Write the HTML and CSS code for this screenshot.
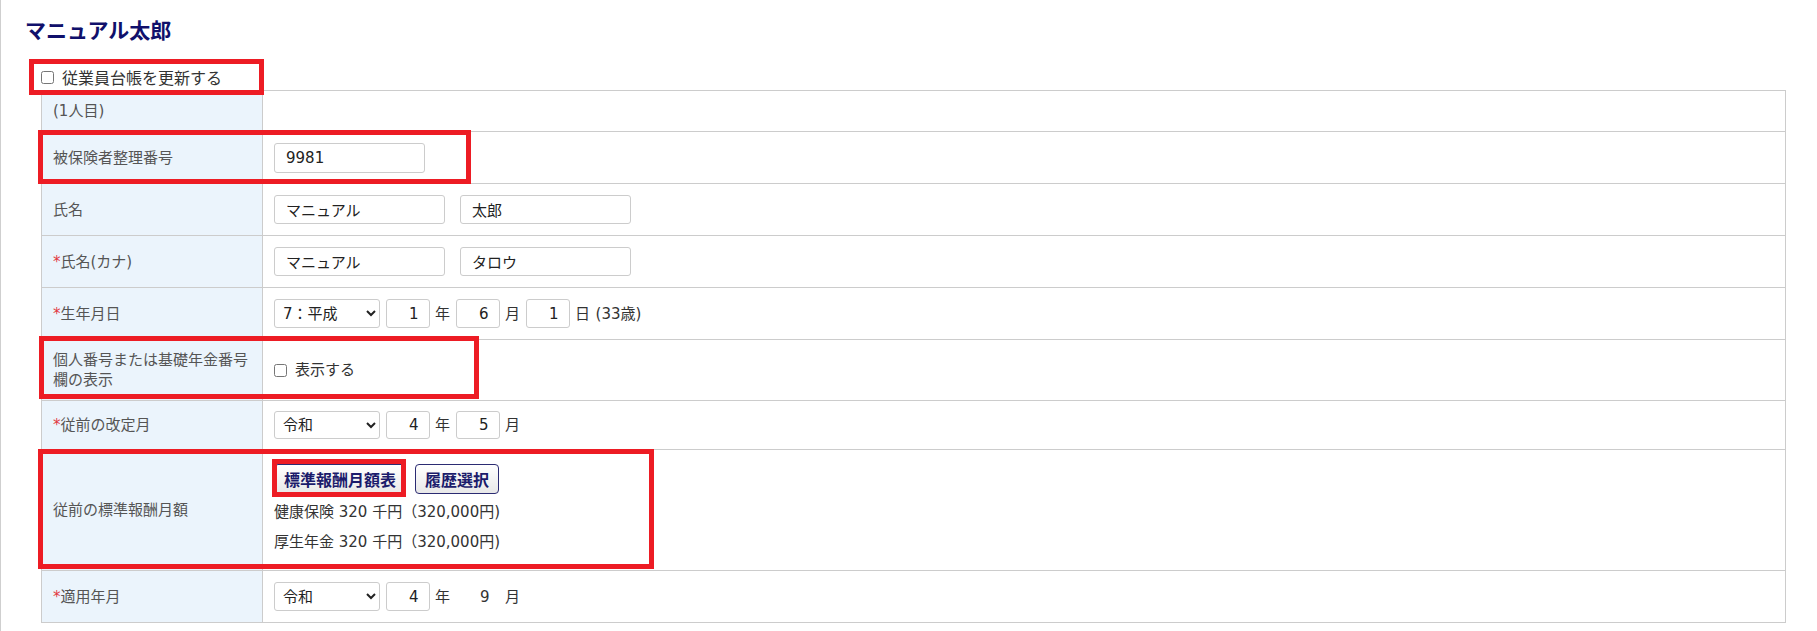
FILE: index.html
```html
<!DOCTYPE html>
<html lang="ja">
<head>
    <meta charset="UTF-8">
    <meta name="viewport" content="width=device-width, initial-scale=1.0">
    <title>マニュアル太郎</title>
    <link rel="stylesheet" href="styles.css">
</head>

<body>
<div class="page">
    <h1 class="emp-name">マニュアル太郎</h1>

    <div class="form-area">
        <label class="update-ledger">
            <input type="checkbox" name="update_ledger">
            <span>従業員台帳を更新する</span>
        </label>

        <table class="form-table">
            <tr>
                <th>(1人目)</th>
                <td></td>
            </tr>
            <tr>
                <th>被保険者整理番号</th>
                <td>
                    <div class="field">
                        <input type="text" class="txt w-id" value="9981">
                    </div>
                </td>
            </tr>
            <tr>
                <th>氏名</th>
                <td>
                    <div class="field names">
                        <input type="text" class="txt w-name" value="マニュアル">
                        <input type="text" class="txt w-name" value="太郎">
                    </div>
                </td>
            </tr>
            <tr>
                <th><span class="req">*</span>氏名(カナ)</th>
                <td>
                    <div class="field names">
                        <input type="text" class="txt w-name" value="マニュアル">
                        <input type="text" class="txt w-name" value="タロウ">
                    </div>
                </td>
            </tr>
            <tr>
                <th><span class="req">*</span>生年月日</th>
                <td>
                    <div class="field">
                        <select class="era">
                            <option>7：平成</option>
                        </select>
                        <input type="text" class="txt w-num" value="1">
                        <span>年</span>
                        <input type="text" class="txt w-num" value="6">
                        <span>月</span>
                        <input type="text" class="txt w-num" value="1">
                        <span>日</span>
                        <span>(33歳)</span>
                    </div>
                </td>
            </tr>
            <tr>
                <th>個人番号または基礎年金番号欄の表示</th>
                <td>
                    <label class="field check">
                        <input type="checkbox" name="show_number">
                        <span>表示する</span>
                    </label>
                </td>
            </tr>
            <tr>
                <th><span class="req">*</span>従前の改定月</th>
                <td>
                    <div class="field short">
                        <select class="era">
                            <option>令和</option>
                        </select>
                        <input type="text" class="txt w-num" value="4">
                        <span>年</span>
                        <input type="text" class="txt w-num" value="5">
                        <span>月</span>
                    </div>
                </td>
            </tr>
            <tr>
                <th>従前の標準報酬月額</th>
                <td>
                    <div class="salary">
                        <div class="btns">
                            <button type="button" class="btn">標準報酬月額表</button>
                            <button type="button" class="btn">履歴選択</button>
                        </div>
                        <div class="amount">健康保険 320 千円（320,000円)</div>
                        <div class="amount">厚生年金 320 千円（320,000円)</div>
                    </div>
                </td>
            </tr>
            <tr>
                <th><span class="req">*</span>適用年月</th>
                <td>
                    <div class="field">
                        <select class="era">
                            <option>令和</option>
                        </select>
                        <input type="text" class="txt w-num" value="4">
                        <span>年</span>
                        <span class="num-text">9</span>
                        <span>月</span>
                    </div>
                </td>
            </tr>
        </table>
    </div>

    <!-- red annotation frames drawn over the form -->
    <div class="mark" style="left: 28px; top: 59px; width: 235px; height: 36px;"></div>
    <div class="mark" style="left: 37px; top: 130px; width: 433px; height: 54px;"></div>
    <div class="mark" style="left: 38px; top: 336px; width: 440px; height: 63px;"></div>
    <div class="mark" style="left: 37px; top: 449px; width: 616px; height: 120px;"></div>
    <div class="mark" style="left: 271px; top: 459px; width: 134px; height: 38px;"></div>
</div>
</body>
</html>
```

FILE: styles.css
```css
body {
    margin: 0;
    background: #ffffff;
    font-family: 'DejaVu Sans', 'Noto Sans CJK JP', sans-serif;
    color: #333;
}

.page {
    position: relative;
    min-height: 631px;
    box-sizing: border-box;
    border-left: 1px solid #cfcfcf;
    padding: 16px 31px 0 24px;
}

.emp-name {
    margin: 0;
    font-size: 21px;
    line-height: 30px;
    font-weight: bold;
    color: #10106b;
}

.form-area {
    margin-left: 16px;
}

.update-ledger {
    display: flex;
    align-items: center;
    gap: 8px;
    height: 26px;
    margin-top: 18px;
    font-size: 16px;
    color: #333;
}

input[type="checkbox"] {
    width: 13px;
    height: 13px;
    margin: 0;
}

.form-table {
    width: 100%;
    border-collapse: collapse;
    font-size: 15px;
    line-height: 20px;
}

.form-table th,
.form-table td {
    border: 1px solid #cccccc;
    padding: 10px 11px;
    vertical-align: middle;
    text-align: left;
}

.form-table th {
    width: 198px;
    background-color: #ebf4fc;
    font-weight: normal;
    color: #555;
}

.req {
    color: #e2393f;
}

.field {
    display: flex;
    align-items: center;
    gap: 5.5px;
    min-height: 31px;
}
.field.short {
    min-height: 28px;
}
.field.names {
    gap: 15px;
}
.field.check {
    gap: 8px;
}

.txt {
    height: 30px;
    box-sizing: border-box;
    border: 1px solid #cccccc;
    border-radius: 3px;
    padding: 0 11px;
    font-family: inherit;
    font-size: 15px;
    color: #222;
    background: #fff;
}
.w-id {
    width: 151px;
}
.w-name {
    width: 171px;
    height: 29px;
}
.w-num {
    width: 44px;
    height: 29px;
    text-align: right;
    padding: 0 10px 0 4px;
}
.short .w-num {
    height: 28px;
}

.num-text {
    width: 44px;
    box-sizing: border-box;
    padding-right: 10px;
    text-align: right;
}

.era {
    width: 106px;
    height: 29px;
    box-sizing: border-box;
    border: 1px solid #cccccc;
    border-radius: 3px;
    padding: 0 4px;
    font-family: inherit;
    font-size: 15px;
    color: #222;
    background: #fff;
}
.short .era {
    height: 28px;
}

.salary {
    padding: 4px 0 3px;
}
.btns {
    display: flex;
    gap: 9px;
    margin-bottom: 3px;
}
.btn {
    height: 30px;
    padding: 0 9px;
    border: 1px solid #2b2b72;
    border-radius: 4px;
    background: linear-gradient(#ffffff, #e8e8e8);
    font-family: inherit;
    font-size: 16px;
    font-weight: bold;
    color: #1b1b6b;
    cursor: pointer;
}
.amount {
    line-height: 30px;
}

.mark {
    position: absolute;
    box-sizing: border-box;
    border: 5px solid #ed1c24;
    pointer-events: none;
}
```
